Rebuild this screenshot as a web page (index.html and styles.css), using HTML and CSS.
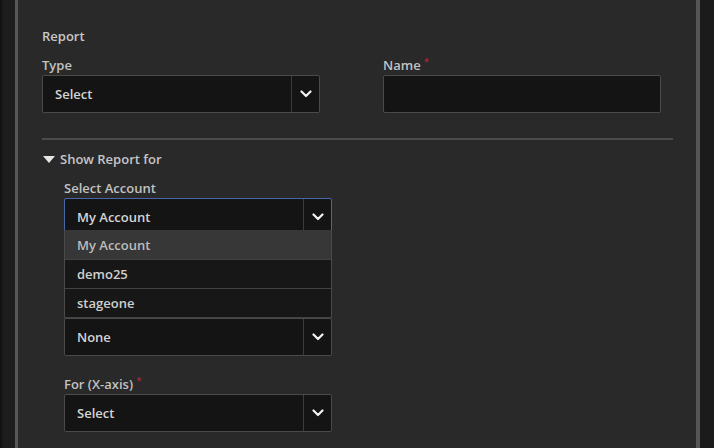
FILE: index.html
```html
<!DOCTYPE html>
<html lang="en">
<head>
<meta charset="utf-8">
<title>Report</title>
<link rel="stylesheet" href="styles.css">
</head>
<body>
<div class="screen">
  <div class="backdrop left"></div>
  <div class="dialog">
    <div class="section-title">Report</div>
    <div class="grid">
      <div class="field">
        <label class="label">Type</label>
        <div class="select">
          <span class="value">Select</span>
          <span class="arrow"><svg width="12" height="8" viewBox="0 0 12 8"><polyline points="1.5,1.5 6,6 10.5,1.5" fill="none" stroke="#f2f2f2" stroke-width="2.2" stroke-linecap="round" stroke-linejoin="round"/></svg></span>
        </div>
      </div>
      <div class="field">
        <label class="label">Name <span class="req">*</span></label>
        <div class="input"></div>
      </div>
    </div>
    <div class="divider"></div>
    <div class="toggle"><span class="tri"></span>Show Report for</div>
    <div class="nested">
      <div class="field account">
        <label class="label">Select Account</label>
        <div class="select focused">
          <span class="value">My Account</span>
          <span class="arrow"><svg width="12" height="8" viewBox="0 0 12 8"><polyline points="1.5,1.5 6,6 10.5,1.5" fill="none" stroke="#f2f2f2" stroke-width="2.2" stroke-linecap="round" stroke-linejoin="round"/></svg></span>
        </div>
        <ul class="menu">
          <li class="option active">My Account</li>
          <li class="option">demo25</li>
          <li class="option">stageone</li>
        </ul>
      </div>
      <div class="field group">
        <div class="select">
          <span class="value">None</span>
          <span class="arrow"><svg width="12" height="8" viewBox="0 0 12 8"><polyline points="1.5,1.5 6,6 10.5,1.5" fill="none" stroke="#f2f2f2" stroke-width="2.2" stroke-linecap="round" stroke-linejoin="round"/></svg></span>
        </div>
      </div>
      <div class="field xaxis">
        <label class="label">For (X-axis) <span class="req">*</span></label>
        <div class="select">
          <span class="value">Select</span>
          <span class="arrow"><svg width="12" height="8" viewBox="0 0 12 8"><polyline points="1.5,1.5 6,6 10.5,1.5" fill="none" stroke="#f2f2f2" stroke-width="2.2" stroke-linecap="round" stroke-linejoin="round"/></svg></span>
        </div>
      </div>
    </div>
  </div>
  <div class="backdrop right"></div>
</div>
</body>
</html>
```
FILE: styles.css
```css
* { box-sizing: border-box; }
html, body {
  margin: 0;
  padding: 0;
  height: 100%;
  background: #1a1a1a;
  overflow: hidden;
}
body {
  font-family: "Open Sans", "Noto Sans", sans-serif;
  font-size: 13px;
  color: #c4c4c4;
}
.screen {
  display: flex;
  height: 448px;
}
.backdrop.left {
  width: 15px;
  background: linear-gradient(to right, #0e0e0e 0, #1c1c1c 3px, #1e1e1e 100%);
}
.backdrop.right {
  flex: 1;
  background: #1b1b1b;
}
.dialog {
  width: 685px;
  background: #292929;
  border-left: 3px solid #585858;
  border-right: 4px solid #565656;
  padding: 27px 23px 0 24px;
}
.section-title {
  line-height: 18px;
  font-weight: 600;
  color: #c8c8c8;
  margin-bottom: 11px;
}
.grid {
  display: grid;
  grid-template-columns: 278px 278px;
  column-gap: 63px;
}
.field {
  display: flex;
  flex-direction: column;
}
.label {
  line-height: 18px;
  font-weight: 600;
  color: #c2c2c2;
  margin-bottom: 1px;
}
.req {
  color: #b02a3a;
  font-size: 9px;
  vertical-align: top;
  line-height: 12px;
}
.select, .input {
  height: 38px;
  background: #141414;
  border: 1px solid #4a4a4a;
  border-radius: 2px;
  display: flex;
  align-items: stretch;
}
.value {
  flex: 1;
  display: flex;
  align-items: center;
  padding-left: 12px;
  font-weight: 600;
  color: #d4d4d4;
}
.arrow {
  width: 28px;
  border-left: 1px solid #3c3c3c;
  display: flex;
  align-items: center;
  justify-content: center;
}
.select.focused {
  border-color: #4767a8;
}
.divider {
  height: 2px;
  background: #4b4b4b;
  margin-top: 25px;
}
.toggle {
  margin-top: 10px;
  line-height: 18px;
  font-weight: 600;
  color: #c6c6c6;
  display: flex;
  align-items: center;
}
.tri {
  width: 0;
  height: 0;
  border-left: 6px solid transparent;
  border-right: 6px solid transparent;
  border-top: 7px solid #e6e6e6;
  margin: 0 5px 0 1px;
}
.nested {
  width: 268px;
  margin-left: 22px;
  margin-top: 11px;
}
.account {
  position: relative;
}
.group { margin-top: 82px; }
.xaxis { margin-top: 19px; }
.menu {
  position: absolute;
  top: 51px;
  left: 0;
  right: 0;
  margin: 0;
  padding: 0;
  list-style: none;
  border-left: 1px solid #4a4a4a;
  border-right: 1px solid #4a4a4a;
  z-index: 2;
}
.option {
  height: 29px;
  display: flex;
  align-items: center;
  padding-left: 12px;
  font-weight: 600;
  color: #cfcfcf;
  background: #171717;
  border-bottom: 1px solid #434343;
}
.option.active {
  height: 30px;
  background: #373737;
  color: #bcbcbc;
}
```
